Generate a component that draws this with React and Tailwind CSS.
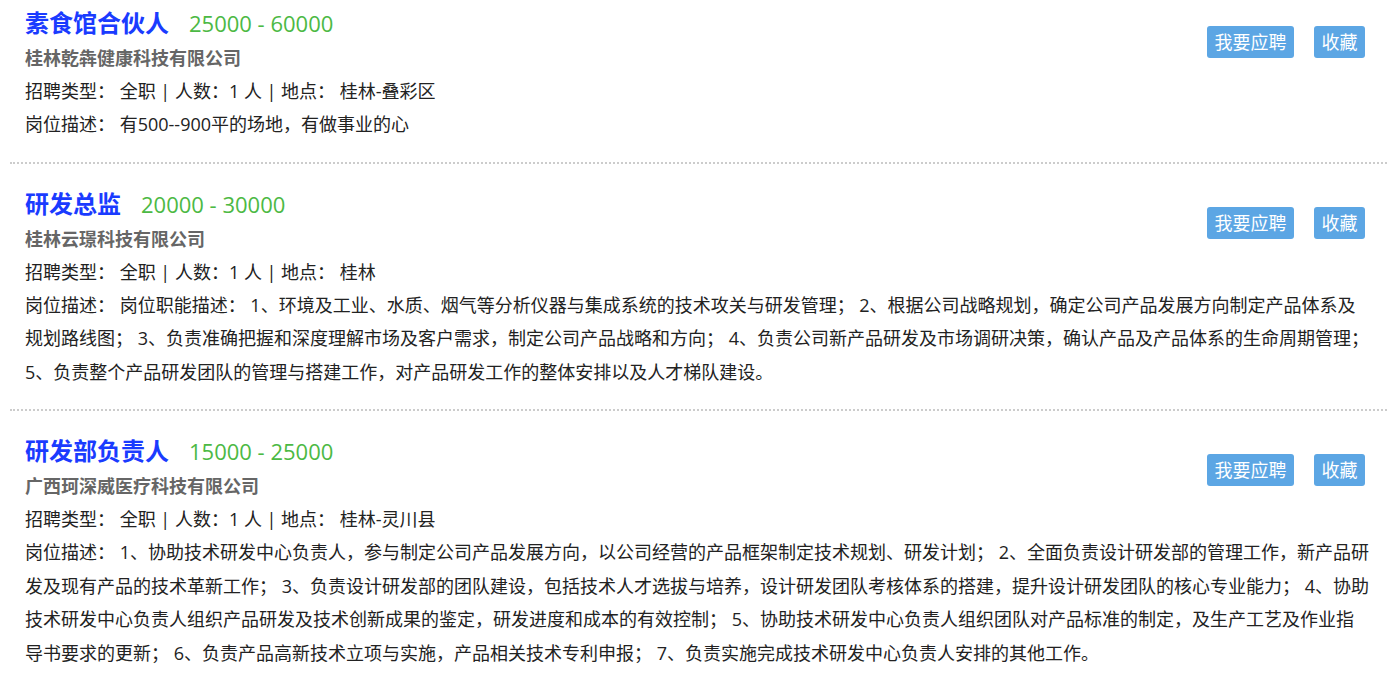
import React from "react";

const jobs = [
  {
    title: "素食馆合伙人",
    salary: "25000 - 60000",
    company: "桂林乾犇健康科技有限公司",
    place: "桂林-叠彩区",
    desc: ["有500--900平的场地，有做事业的心"],
  },
  {
    title: "研发总监",
    salary: "20000 - 30000",
    company: "桂林云璟科技有限公司",
    place: "桂林",
    desc: [
      "岗位职能描述： 1、环境及工业、水质、烟气等分析仪器与集成系统的技术攻关与研发管理； 2、根据公司战略规划，确定公司产品发展方向制定产品体系及",
      "规划路线图； 3、负责准确把握和深度理解市场及客户需求，制定公司产品战略和方向； 4、负责公司新产品研发及市场调研决策，确认产品及产品体系的生命周期管理；",
      "5、负责整个产品研发团队的管理与搭建工作，对产品研发工作的整体安排以及人才梯队建设。",
    ],
  },
  {
    title: "研发部负责人",
    salary: "15000 - 25000",
    company: "广西珂深威医疗科技有限公司",
    place: "桂林-灵川县",
    desc: [
      "1、协助技术研发中心负责人，参与制定公司产品发展方向，以公司经营的产品框架制定技术规划、研发计划； 2、全面负责设计研发部的管理工作，新产品研",
      "发及现有产品的技术革新工作； 3、负责设计研发部的团队建设，包括技术人才选拔与培养，设计研发团队考核体系的搭建，提升设计研发团队的核心专业能力； 4、协助",
      "技术研发中心负责人组织产品研发及技术创新成果的鉴定，研发进度和成本的有效控制； 5、协助技术研发中心负责人组织团队对产品标准的制定，及生产工艺及作业指",
      "导书要求的更新； 6、负责产品高新技术立项与实施，产品相关技术专利申报； 7、负责实施完成技术研发中心负责人安排的其他工作。",
    ],
  },
];

function Job({ job, first, last }) {
  return (
    <div
      className={
        (first ? "pt-[5px] " : "pt-[22px] ") +
        (last ? "pb-[20px] " : "pb-[20px] border-b-2 border-dotted border-[#cccccc] ") +
        "pl-[15px] pr-[12px]"
      }
    >
      <div className="flex">
        <div className="flex-1 min-w-0">
          <div className="flex items-baseline h-[36px] leading-[36px]">
            <span className="text-[24px] font-bold text-[#1a3bff]">{job.title}</span>
            <span className="ml-[20px] text-[22px] text-[#4cb944]">{job.salary}</span>
          </div>
          <div className="text-[18px] leading-[34px] font-bold text-[#666666]">{job.company}</div>
          <div className="text-[18px] leading-[33px] text-[#222222]">
            招聘类型： 全职 | 人数：1 人 | 地点： {job.place}
          </div>
        </div>
        <div className="flex items-start gap-[20px] pt-[21px] pr-[10px]">
          <button className="h-[32px] px-[7.5px] rounded-[3px] bg-[#5ca6e4] text-white text-[18px] leading-[32px]">
            我要应聘
          </button>
          <button className="h-[32px] px-[7.5px] rounded-[3px] bg-[#5ca6e4] text-white text-[18px] leading-[32px]">
            收藏
          </button>
        </div>
      </div>
      <div className="text-[18px] leading-[33.5px] text-[#222222] whitespace-nowrap">
        {job.desc.map((line, i) => (
          <React.Fragment key={i}>
            {i === 0 ? "岗位描述： " : null}
            {line}
            {i < job.desc.length - 1 ? <br /> : null}
          </React.Fragment>
        ))}
      </div>
    </div>
  );
}

export default function App() {
  return (
    <div
      className="w-[1393px] h-[673px] overflow-hidden bg-white"
      style={{ fontFamily: '"Open Sans", "Noto Sans CJK SC", "Noto Sans", sans-serif' }}
    >
      <div className="ml-[10px] mr-[6px]">
        {jobs.map((job, i) => (
          <Job key={i} job={job} first={i === 0} last={i === jobs.length - 1} />
        ))}
      </div>
    </div>
  );
}
